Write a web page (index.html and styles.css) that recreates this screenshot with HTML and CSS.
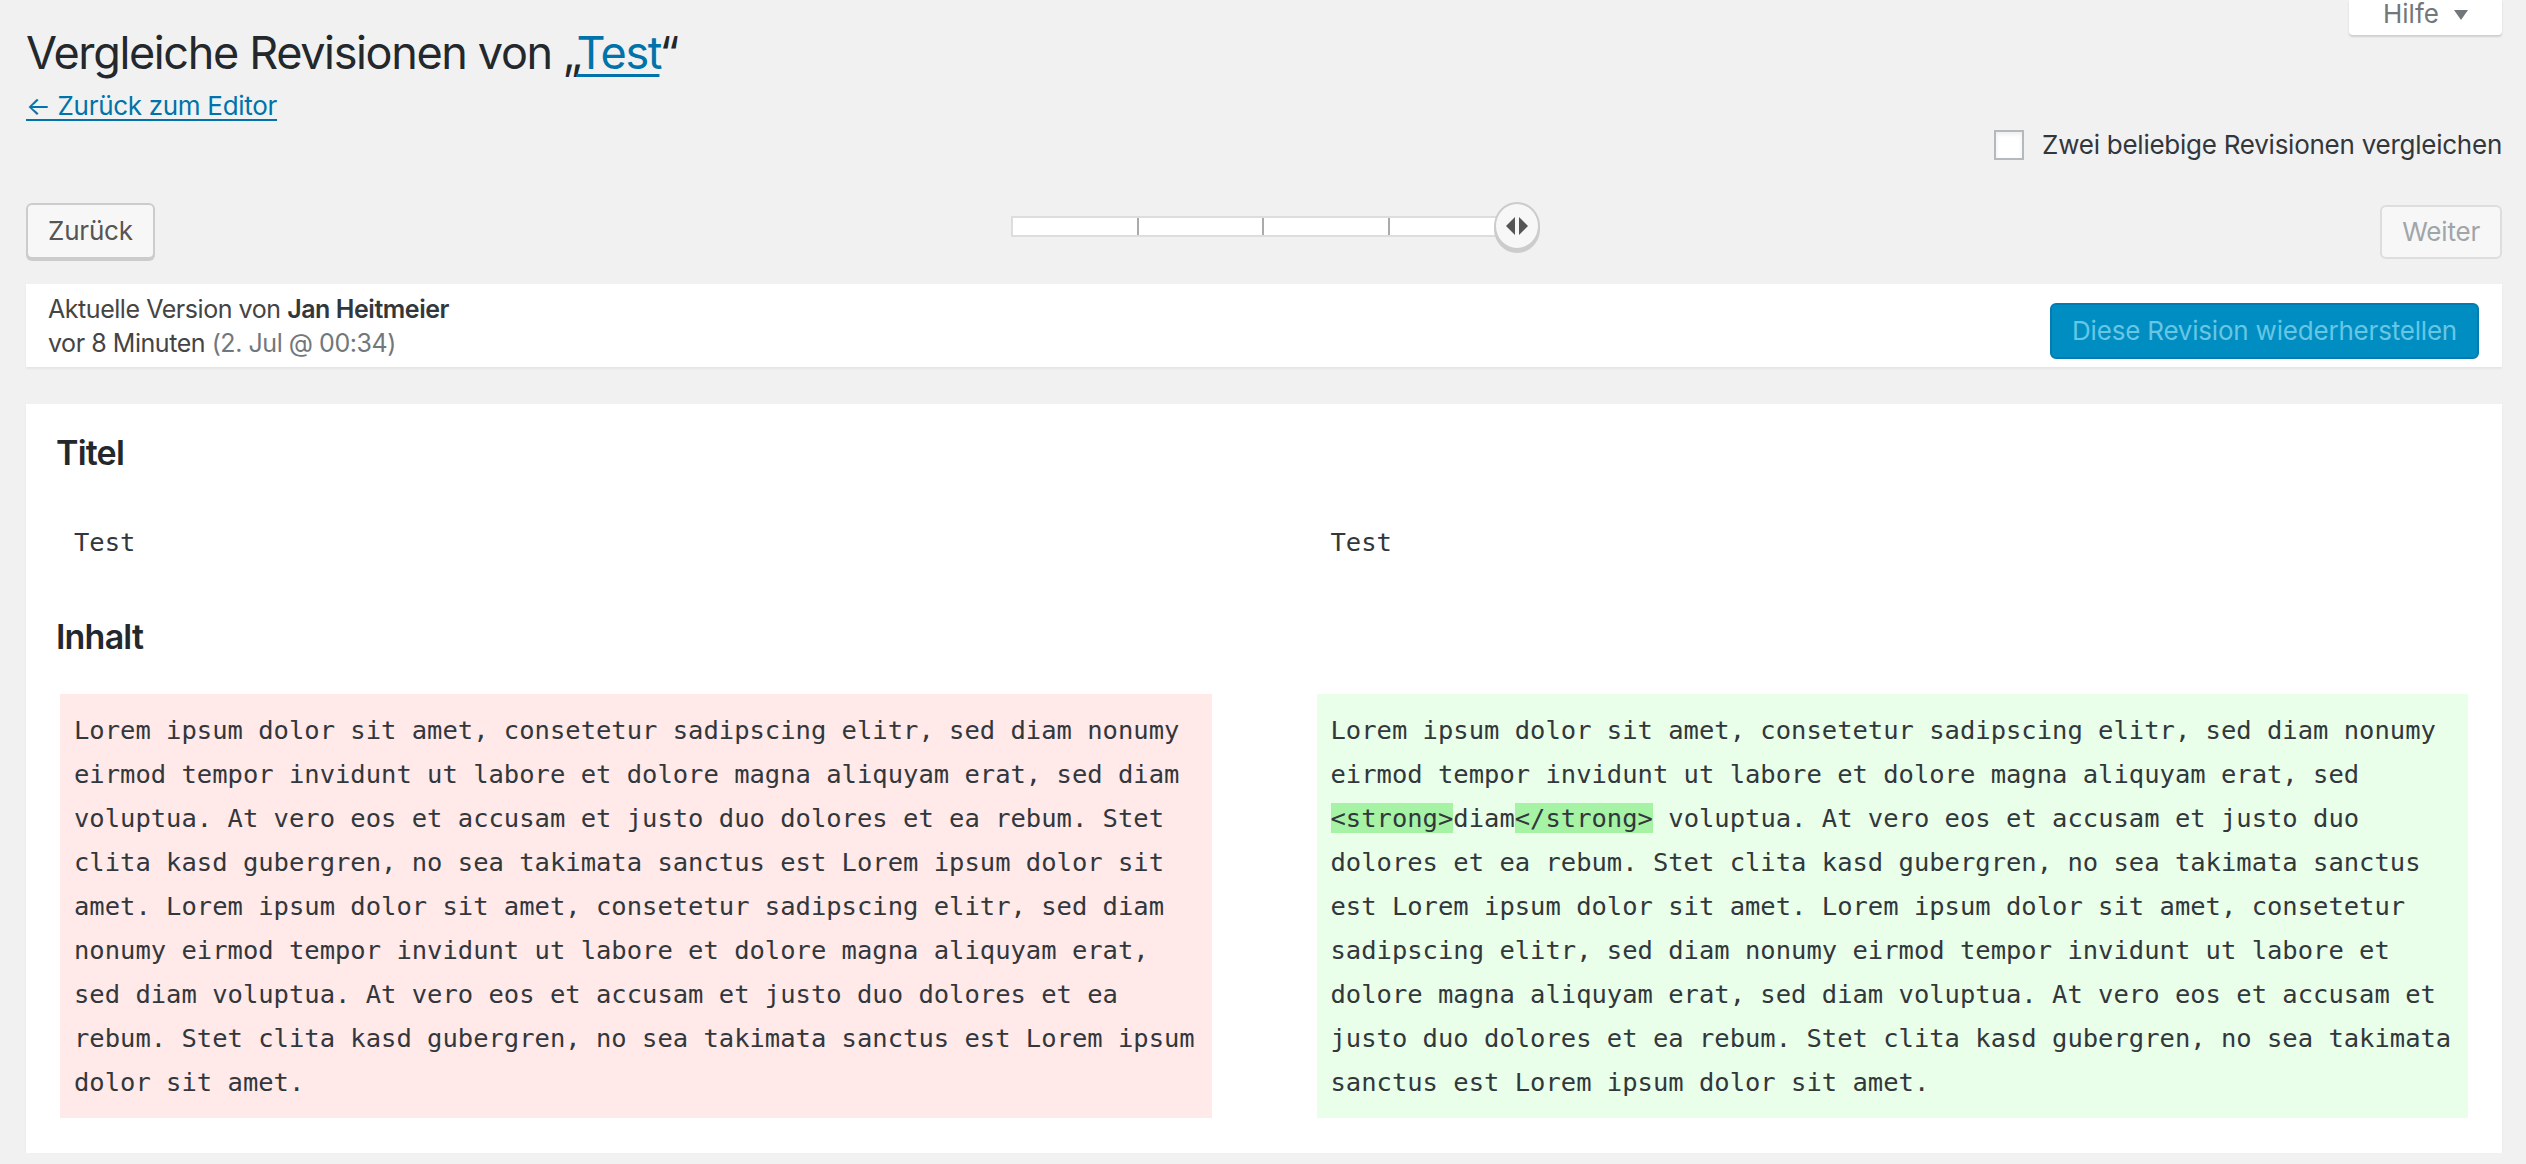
FILE: index.html
```html
<!DOCTYPE html>
<html lang="de">
<head>
<meta charset="utf-8">
<title>Vergleiche Revisionen</title>
<link rel="stylesheet" href="styles.css">
</head>
<body>
<div class="wrap">
  <div class="help-tab">Hilfe <svg class="help-arrow" width="16" height="12" viewBox="0 0 16 12"><path d="M1 1 H15 L8 11 Z" fill="#72777c"/></svg></div>
  <h1 class="page-title">Vergleiche Revisionen von „<a href="#">Test</a>“</h1>
  <a class="back-link" href="#">← Zurück zum Editor</a>
  <div class="compare-two"><label class="compare-label"><span class="checkbox"></span>Zwei beliebige Revisionen vergleichen</label></div>
  <div class="controls">
    <button class="button btn-prev">Zurück</button>
    <div class="slider">
      <div class="track">
        <span class="tick"></span><span class="tick"></span><span class="tick"></span><span class="tick last"></span>
        <div class="handle"><svg width="26" height="20" viewBox="0 0 26 20"><path d="M11 1 L2 10 L11 19 Z" fill="#555"/><path d="M15 1 L24 10 L15 19 Z" fill="#555"/></svg></div>
      </div>
    </div>
    <button class="button btn-next" disabled>Weiter</button>
  </div>
  <div class="meta">
    <div class="meta-text">
      <div>Aktuelle Version von <strong>Jan Heitmeier</strong></div>
      <div>vor 8 Minuten <span class="date">(2. Jul @ 00:34)</span></div>
    </div>
    <button class="button-primary" disabled>Diese Revision wiederherstellen</button>
  </div>
  <div class="diff">
    <h3 class="diff-heading">Titel</h3>
    <div class="diff-row title-row">
      <div class="cell">Test</div>
      <div class="cell">Test</div>
    </div>
    <h3 class="diff-heading">Inhalt</h3>
    <div class="diff-row content-row">
      <div class="cell deleted">Lorem ipsum dolor sit amet, consetetur sadipscing elitr, sed diam nonumy eirmod tempor invidunt ut labore et dolore magna aliquyam erat, sed diam voluptua. At vero eos et accusam et justo duo dolores et ea rebum. Stet clita kasd gubergren, no sea takimata sanctus est Lorem ipsum dolor sit amet. Lorem ipsum dolor sit amet, consetetur sadipscing elitr, sed diam nonumy eirmod tempor invidunt ut labore et dolore magna aliquyam erat, sed diam voluptua. At vero eos et accusam et justo duo dolores et ea rebum. Stet clita kasd gubergren, no sea takimata sanctus est Lorem ipsum dolor sit amet.</div>
      <div class="cell added">Lorem ipsum dolor sit amet, consetetur sadipscing elitr, sed diam nonumy eirmod tempor invidunt ut labore et dolore magna aliquyam erat, sed <ins>&lt;strong&gt;</ins>diam<ins>&lt;/strong&gt;</ins> voluptua. At vero eos et accusam et justo duo dolores et ea rebum. Stet clita kasd gubergren, no sea takimata sanctus est Lorem ipsum dolor sit amet. Lorem ipsum dolor sit amet, consetetur sadipscing elitr, sed diam nonumy eirmod tempor invidunt ut labore et dolore magna aliquyam erat, sed diam voluptua. At vero eos et accusam et justo duo dolores et ea rebum. Stet clita kasd gubergren, no sea takimata sanctus est Lorem ipsum dolor sit amet.</div>
    </div>
  </div>
</div>
</body>
</html>
```
FILE: styles.css
```css
* { box-sizing: border-box; }
html, body { margin: 0; padding: 0; }
body {
  background: #f1f1f1;
  color: #444;
  font-family: Inter, "Liberation Sans", sans-serif;
  font-size: 26px;
  line-height: 36px;
}
.wrap {
  padding: 0 24px 0 26px;
}
.help-tab {
  float: right;
  width: 153px;
  height: 35px;
  background: #fff;
  box-shadow: 0 2px 2px rgba(0,0,0,0.14);
  border-radius: 0 0 4px 4px;
  color: #72777c;
  font-size: 26px;
  line-height: 28px;
  padding-left: 34px;
  display: flex;
  align-items: flex-start;
  gap: 14px;
}
.help-arrow { margin-top: 9px; }
.page-title {
  margin: 0;
  padding: 23px 0 5px;
  font-size: 45px;
  line-height: 60px;
  font-weight: 400;
  letter-spacing: -1.35px;
  color: #23282d;
}
.page-title a { color: #0073aa; text-decoration: underline; text-decoration-thickness: 3px; text-underline-offset: 5px; }
.back-link {
  display: block;
  width: max-content;
  color: #0073aa;
  text-decoration: underline;
  text-decoration-thickness: 2px;
  text-underline-offset: 4px;
  line-height: 36px;
  letter-spacing: -0.3px;
}
.compare-two {
  display: flex;
  justify-content: flex-end;
  margin-top: 3px;
}
.compare-label {
  display: flex;
  align-items: center;
  gap: 18px;
  line-height: 36px;
  color: #32373c;
  letter-spacing: -0.25px;
}
.checkbox {
  width: 30px;
  height: 30px;
  background: #fff;
  border: 2px solid #b4b9be;
  box-shadow: inset 0 2px 4px rgba(0,0,0,0.08);
}
.controls {
  display: grid;
  grid-template-columns: 1fr auto 1fr;
  margin-top: 40px;
  align-items: start;
}
.button {
  font: inherit;
  height: 56px;
  padding: 0 20px;
  border-radius: 6px;
  border: 2px solid #ccc;
  background: #f7f7f7;
  color: #555;
  box-shadow: 0 2px 0 #ccc;
  letter-spacing: -0.2px;
}
.btn-prev { justify-self: start; }
.btn-next {
  justify-self: end;
  margin-top: 2px;
  height: 54px;
  color: #a0a5aa;
  border-color: #ddd;
  box-shadow: none;
  padding: 0 20px;
}
.slider {
  margin-top: 13px;
  width: 506px;
}
.track {
  position: relative;
  height: 21px;
  background: #fff;
  border: 2px solid #ddd;
  display: grid;
  grid-template-columns: repeat(4, 1fr);
}
.tick {
  border-right: 2px solid #aaa;
}
.tick.last { border-right: none; }
.handle {
  position: absolute;
  right: -25px;
  top: -16px;
  width: 46px;
  height: 48px;
  border-radius: 50%;
  background: #f7f7f7;
  border: 2px solid #ccc;
  box-shadow: 0 3px 0 #ccc;
  display: flex;
  align-items: center;
  justify-content: center;
}
.meta {
  margin-top: 25px;
  background: #fff;
  box-shadow: 0 2px 2px rgba(0,0,0,0.05);
  padding: 8px 23px 7px 22px;
  display: flex;
  justify-content: space-between;
  align-items: flex-start;
}
.meta-text { font-size: 25px; line-height: 34px; letter-spacing: -0.45px; }
.meta-text strong { font-weight: 600; color: #32373c; }
.meta-text .date { color: #72777c; }
.button-primary {
  font: inherit;
  margin-top: 11px;
  height: 56px;
  padding: 0 20px;
  border-radius: 6px;
  border: 2px solid #007cb2;
  background: #008ec2;
  color: #66c6e4;
  letter-spacing: -0.2px;
}
.diff {
  margin-top: 37px;
  background: #fff;
  box-shadow: 0 2px 2px rgba(0,0,0,0.05);
  padding: 30px 30px 35px;
}
.diff-heading {
  margin: 0;
  font-size: 34px;
  line-height: 38px;
  font-weight: 600;
  color: #23282d;
  letter-spacing: -0.8px;
}
.diff-row {
  display: grid;
  grid-template-columns: 1fr 1fr;
  column-gap: 105px;
  padding: 0 4px;
}
.title-row { margin: 34px 0 40px; }
.content-row { margin-top: 38px; }
.cell {
  padding: 14px;
  font-family: "DejaVu Sans Mono", "Liberation Mono", monospace;
  font-size: 25.5px;
  line-height: 44px;
  color: #32373c;
}
.deleted { background: #ffe9e9; }
.added { background: #e9ffe9; }
.added ins { background: #a6f3a6; text-decoration: none; }
```
